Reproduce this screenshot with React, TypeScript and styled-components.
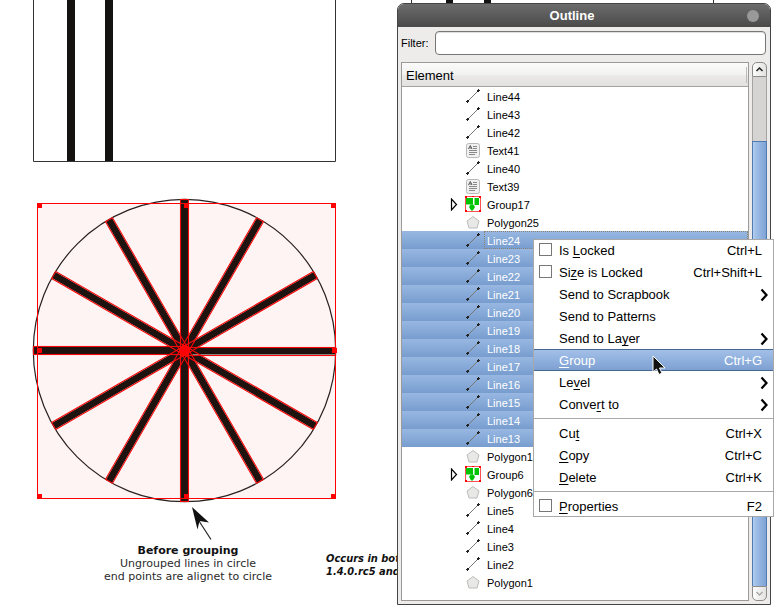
import React from "react";
import styled, { createGlobalStyle, css } from "styled-components";

const GlobalStyle = createGlobalStyle`
  * { box-sizing: border-box; }
  body {
    margin: 0;
    background: #fff;
    color: #000;
    font-family: "Liberation Sans", Arial, sans-serif;
    font-size: 13px;
  }
  button, input { font: inherit; color: inherit; }
`;

/* ---------- drawing canvas ---------- */

const Board = styled.main`
  position: relative;
  min-height: 100vh;
  overflow: hidden;
`;

const Drawing = styled.svg`
  display: block;
`;

const Note = styled.p<{ $x: number; $y: number }>`
  position: absolute;
  left: ${(p) => p.$x}px;
  top: ${(p) => p.$y}px;
  margin: 0;
  color: #2b2b2b;
  font-family: "DejaVu Sans", sans-serif;
  font-size: 11px;
  line-height: 13px;
  white-space: nowrap;
  text-align: center;
`;

const NoteTitle = styled.strong`
  display: block;
  color: #111;
`;

const VersionNote = styled(Note)`
  color: #111;
  font-family: "DejaVu Sans Condensed", "DejaVu Sans", sans-serif;
  font-weight: bold;
  font-style: italic;
  text-align: left;
`;

/* ---------- outline window ---------- */

const Window = styled.section`
  position: absolute;
  top: 3px;
  left: 397px;
  right: 10px;
  background: #edeceb;
  border: 1px solid #444;
  border-radius: 7px 7px 0 0;
`;

const TitleBar = styled.header`
  display: grid;
  grid-template-columns: 1fr 24px;
  align-items: center;
  height: 23px;
  border-radius: 6px 6px 0 0;
  background: linear-gradient(#6c6c6c, #4a4a4a);
  color: #fff;
`;

const Title = styled.h1`
  margin: 0;
  font-size: 13px;
  line-height: 22px;
  text-align: center;
`;

const CloseButton = styled.button`
  width: 12px;
  height: 12px;
  margin-left: 1px;
  padding: 0;
  border: 0;
  border-radius: 50%;
  background: #999;
`;

const FilterRow = styled.div`
  display: flex;
  align-items: center;
  gap: 6px;
  padding: 4px 4px 7px 3px;
  font-size: 11px;
`;

const FilterInput = styled.input`
  flex: 1;
  min-width: 0;
  height: 24px;
  border: 1px solid #777;
  border-radius: 4px;
  background: #fff;
  box-shadow: inset 0 1px 1px #ddd;
`;

const Content = styled.div`
  display: flex;
  gap: 3px;
  padding: 0 3px 3px;
`;

const TreePanel = styled.div`
  flex: 1;
  min-width: 0;
  border: 1px solid #9c9a98;
  background: #fff;
  padding-bottom: 9px;
`;

const TreeHeader = styled.div`
  display: flex;
  height: 24px;
  padding: 4px 1px 3px 4px;
  border-bottom: 1px solid #a5a3a0;
  background: linear-gradient(#fbfbfb, #f2f2f1 50%, #ebeae9 52%, #e2e1e0);
  line-height: 18px;
`;

const HeaderLabel = styled.span`
  flex: 1;
`;

const HeaderGrip = styled.span`
  width: 1px;
  background: #bbb;
`;

const Tree = styled.ul`
  margin: 0;
  padding: 0;
  list-style: none;
`;

const TreeRow = styled.li<{ $selected: boolean }>`
  display: grid;
  grid-template-columns: 17px 16px 1fr;
  align-items: center;
  height: 18px;
  padding-left: 46px;
  ${(p) =>
    p.$selected &&
    css`
      background: linear-gradient(#98b8e2, #779dce);
      color: #fff;
    `}
`;

const Expander = styled.button`
  grid-column: 1;
  display: flex;
  width: 12px;
  padding: 0 0 0 2px;
  border: 0;
  background: none;
`;

const IconCell = styled.span`
  grid-column: 2;
  display: flex;
`;

const RowLabel = styled.span<{ $focused: boolean }>`
  grid-column: 3;
  margin-left: 3px;
  padding: 2px 0 0 2px;
  border: 1px ${(p) => (p.$focused ? "dotted #8b8577" : "solid transparent")};
  font-size: 11px;
  line-height: 14px;
`;

const ScrollBar = styled.div`
  display: flex;
  flex-direction: column;
  width: 15px;
`;

const ScrollButton = styled.button<{ $end?: boolean }>`
  display: grid;
  place-items: center;
  height: 15px;
  padding: 0;
  border: 1px solid #8e8c8a;
  border-radius: ${(p) => (p.$end ? "0 0 5px 5px" : "5px 5px 0 0")};
  background: linear-gradient(90deg, #fdfdfd, #e2e2e1);
`;

const ScrollTrack = styled.div`
  display: flex;
  flex: 1;
  flex-direction: column;
  padding-top: 64px;
  border: solid #a5a3a1;
  border-width: 0 1px;
  background: #d5d4d2;
`;

const ScrollThumb = styled.div`
  flex: 1;
  margin: 0 -1px;
  border: 1px solid #4f7ab0;
  border-bottom: 0;
  background: linear-gradient(90deg, #b5cff0, #a2c0e7 20%, #7ea3d6);
`;

/* ---------- context menu ---------- */

const Menu = styled.div`
  position: absolute;
  top: 239px;
  left: 533px;
  right: 7px;
  background: #fff;
  outline: 1px solid #a8a8a8;
  outline-offset: -1px;
`;

const itemStyle = css`
  display: grid;
  grid-template-columns: 20px 1fr auto;
  align-items: center;
  width: 100%;
  height: 22px;
  padding: 2px 12px 0 6px;
  border: 0;
  background: none;
  line-height: 20px;
  text-align: left;
`;

const MenuButton = styled.button<{ $active: boolean; $submenu: boolean }>`
  ${itemStyle}
  ${(p) =>
    p.$submenu &&
    css`
      padding-right: 4px;
    `}
  ${(p) =>
    p.$active &&
    css`
      background: linear-gradient(#a4c1e9, #7c9fd1);
      box-shadow: inset 0 1px #44678f, inset 0 -1px #44678f;
      color: #fff;
    `}
`;

const MenuCheck = styled.label`
  ${itemStyle}
`;

const CheckBox = styled.input`
  appearance: none;
  align-self: start;
  width: 13px;
  height: 13px;
  margin: 2px 0 0;
  border: 1px solid #777;
  background: #fff;
`;

const MenuLabel = styled.span`
  grid-column: 2;
`;

const Mnemonic = styled.u`
  text-underline-offset: 2px;
  text-decoration-thickness: 1px;
  text-decoration-skip-ink: none;
`;

const Divider = styled.hr`
  height: 1px;
  margin: 3px 0;
  border: 0;
  background: #a8a8a8;
`;

const Pointer = styled.svg`
  position: absolute;
  left: 652px;
  top: 355px;
`;

/* ---------- data ---------- */

type Kind = "line" | "text" | "group" | "polygon";

const selectedNames = [24, 23, 22, 21, 20, 19, 18, 17, 16, 15, 14, 13].map((n) => `Line${n}`);

const elements = [
  "Line44", "Line43", "Line42", "Text41", "Line40", "Text39", "Group17", "Polygon25",
  ...selectedNames,
  "Polygon12", "Group6", "Polygon6", "Line5", "Line4", "Line3", "Line2", "Polygon1",
];

const kindOf = (name: string) => name.replace(/\d+/, "").toLowerCase() as Kind;

interface Item {
  label: string;
  mnemonic?: string;
  shortcut?: string;
  check?: boolean;
  submenu?: boolean;
  active?: boolean;
}

const groups: Item[][] = [
  [
    { label: "Is Locked", mnemonic: "L", shortcut: "Ctrl+L", check: true },
    { label: "Size is Locked", mnemonic: "z", shortcut: "Ctrl+Shift+L", check: true },
    { label: "Send to Scrapbook", submenu: true },
    { label: "Send to Patterns" },
    { label: "Send to Layer", mnemonic: "y", submenu: true },
    { label: "Group", mnemonic: "G", shortcut: "Ctrl+G", active: true },
    { label: "Level", mnemonic: "v", submenu: true },
    { label: "Convert to", mnemonic: "r", submenu: true },
  ],
  [
    { label: "Cut", mnemonic: "t", shortcut: "Ctrl+X" },
    { label: "Copy", mnemonic: "C", shortcut: "Ctrl+C" },
    { label: "Delete", mnemonic: "D", shortcut: "Ctrl+K" },
  ],
  [{ label: "Properties", mnemonic: "P", shortcut: "F2", check: true }],
];

/* ---------- icons ---------- */

function ElementIcon({ kind }: { kind: Kind }) {
  switch (kind) {
    case "line":
      return (
        <svg width="16" height="16" viewBox="0 0 16 16" aria-hidden="true">
          <path d="M3 13 13 3" stroke="#777" />
          <path d="M1 13.500h3M2.500 12v3M12 2.500h3M13.500 1v3" stroke="#222" />
          <path d="M3 12.500h1M12 3.500h1" stroke="#222" />
        </svg>
      );
    case "text":
      return (
        <svg width="16" height="16" viewBox="0 0 16 16" aria-hidden="true">
          <rect x="1.500" y="1.500" width="13" height="14" rx="2" fill="#f1f1f1" stroke="#b8b8b8" />
          <path d="M8 4.500h4M8 6.500h4M4 8.500h8M4 10.500h8M4 12.500h6" stroke="#888" />
          <path d="m3.500 7 1.800-3.500L7 7M4.500 6h2" stroke="#555" fill="none" />
        </svg>
      );
    case "group":
      return (
        <svg width="16" height="16" viewBox="0 0 16 16" aria-hidden="true">
          <rect x="0.500" y="0.500" width="15" height="15" fill="#fff" stroke="#ff5050" />
          <path d="M1 2h7v6.500H1zM9.500 2H14v7H9.500z" fill="#00c400" />
          <path d="M5.500 8.500h3l1.500 2.500-1.500 2.500L7 15l-1.500-1.500L4 11z" fill="#00c400" />
          <path d="M0 0h2v2H0zM7 0h2v1H7zM14 0h2v2h-2zM0 14h2v2H0zM14 14h2v2h-2z" fill="#f00" />
        </svg>
      );
    default:
      return (
        <svg width="16" height="16" viewBox="0 0 16 16" aria-hidden="true">
          <path d="m8 2.500 6 4.500-2 7H4L2 7z" fill="#e8e8e6" stroke="#bcbcba" />
        </svg>
      );
  }
}

function ScrollArrow({ down }: { down?: boolean }) {
  return (
    <svg width="9" height="7" viewBox="0 0 9 7" aria-hidden="true">
      <path
        d={down ? "m1.500 2 3 3 3-3" : "m1.500 5 3-3 3 3"}
        fill="none"
        stroke={down ? "#aaa" : "#222"}
        strokeWidth="1.500"
      />
    </svg>
  );
}

/* ---------- wheel drawing ---------- */

const angles = [0, 30, 60, 90, 120, 150, 180, 210, 240, 270, 300, 330];
const handles = [
  [37, 203], [184, 203], [331, 203],
  [37, 348], [332, 348],
  [37, 494], [184, 494], [331, 494],
];

function Canvas() {
  return (
    <Drawing width="720" height="545" viewBox="0 0 720 545" role="img" aria-label="Wheel of twelve lines">
      <g fill="none" stroke="#333">
        <path d="M33.500 0v161.500h302V0M411.500 0v10M713.500 0v10" />
      </g>
      <path d="M67 0h8v161h-8zM105 0h8v161h-8zM446 0h7v10h-7zM484 0h7v10h-7z" fill="#151311" />
      <rect x="37.500" y="203.500" width="298" height="295" fill="#fff4f4" />
      <circle cx="184.500" cy="350.500" r="151.200" fill="none" stroke="#2a2020" strokeWidth="1.200" />
      <g transform="translate(184.500 350.500)">
        {angles.map((a) => (
          <rect key={a} width="151" y="-3.500" height="7" fill="#1f1310" transform={`rotate(${a})`} />
        ))}
        <path d="M8 4h143" stroke="#8a8580" />
        {angles.map((a) => (
          <rect
            key={a}
            x="-4"
            y={a === 0 ? -3 : -4}
            width="155"
            height="8"
            fill="none"
            stroke="#f80808"
            strokeWidth="1.100"
            transform={`rotate(${a})`}
          />
        ))}
        <circle r="4" fill="#f00" />
      </g>
      <rect x="37.500" y="203.500" width="298" height="295" fill="none" stroke="#f00" />
      {handles.map(([x, y]) => (
        <rect key={`${x}-${y}`} x={x} y={y} width="5" height="5" fill="#f00" />
      ))}
      <path d="m199 521 12 18.500" stroke="#222" strokeWidth="1.200" />
      <path d="m192 507 17 15.500-9.500-1.500-2 8.500z" fill="#111" />
    </Drawing>
  );
}

function OutlineWindow() {
  return (
    <Window aria-label="Outline">
      <TitleBar>
        <Title>Outline</Title>
        <CloseButton aria-label="Close" />
      </TitleBar>
      <FilterRow>
        <label htmlFor="filter">Filter:</label>
        <FilterInput id="filter" type="text" />
      </FilterRow>
      <Content>
        <TreePanel>
          <TreeHeader>
            <HeaderLabel>Element</HeaderLabel>
            <HeaderGrip />
          </TreeHeader>
          <Tree role="tree">
            {elements.map((name) => {
              const kind = kindOf(name);
              const selected = selectedNames.includes(name);
              return (
                <TreeRow key={name} role="treeitem" aria-selected={selected} $selected={selected}>
                  {kind === "group" && (
                    <Expander aria-label={`Expand ${name}`}>
                      <svg width="9" height="13" viewBox="0 0 9 13" aria-hidden="true">
                        <path d="M1.500 1v11L6.500 6.500z" fill="#fff" stroke="#000" strokeWidth="1.200" />
                      </svg>
                    </Expander>
                  )}
                  <IconCell>
                    <ElementIcon kind={kind} />
                  </IconCell>
                  <RowLabel $focused={name === "Line24"}>{name}</RowLabel>
                </TreeRow>
              );
            })}
          </Tree>
        </TreePanel>
        <ScrollBar>
          <ScrollButton aria-label="Scroll up">
            <ScrollArrow />
          </ScrollButton>
          <ScrollTrack>
            <ScrollThumb />
          </ScrollTrack>
          <ScrollButton $end aria-label="Scroll down">
            <ScrollArrow down />
          </ScrollButton>
        </ScrollBar>
      </Content>
    </Window>
  );
}

function ItemLabel({ label, mnemonic }: { label: string; mnemonic?: string }) {
  if (!mnemonic) return <MenuLabel>{label}</MenuLabel>;
  const at = label.indexOf(mnemonic);
  return (
    <MenuLabel>
      {label.slice(0, at)}
      <Mnemonic>{mnemonic}</Mnemonic>
      {label.slice(at + 1)}
    </MenuLabel>
  );
}

function MenuItem({ item }: { item: Item }) {
  if (item.check) {
    return (
      <MenuCheck>
        <CheckBox type="checkbox" />
        <ItemLabel label={item.label} mnemonic={item.mnemonic} />
        <span>{item.shortcut}</span>
      </MenuCheck>
    );
  }
  return (
    <MenuButton role="menuitem" $active={!!item.active} $submenu={!!item.submenu}>
      <ItemLabel label={item.label} mnemonic={item.mnemonic} />
      {item.shortcut && <span>{item.shortcut}</span>}
      {item.submenu && (
        <svg width="10" height="14" viewBox="0 0 10 14" aria-hidden="true">
          <path d="m1.500 1.500 5 5.500-5 5.500" fill="none" stroke="#000" strokeWidth="2.200" />
        </svg>
      )}
    </MenuButton>
  );
}

export default function App() {
  return (
    <Board>
      <GlobalStyle />
      <Canvas />
      <Note $x={104} $y={544}>
        <NoteTitle>Before grouping</NoteTitle>
        Ungrouped lines in circle
        <br />
        end points are alignet to circle
      </Note>
      <VersionNote $x={326} $y={552}>
        Occurs in both
        <br />
        1.4.0.rc5 and
      </VersionNote>
      <OutlineWindow />
      <Menu role="menu">
        {groups.map((items, i) => (
          <React.Fragment key={items[0].label}>
            {i > 0 && <Divider />}
            {items.map((item) => (
              <MenuItem key={item.label} item={item} />
            ))}
          </React.Fragment>
        ))}
      </Menu>
      <Pointer width="15" height="22" viewBox="0 0 15 22" aria-hidden="true">
        <path d="M1 1v16l3.500-3 2.500 5.500 3-1.500-2.500-5H13z" fill="#111" stroke="#fff" />
      </Pointer>
    </Board>
  );
}
